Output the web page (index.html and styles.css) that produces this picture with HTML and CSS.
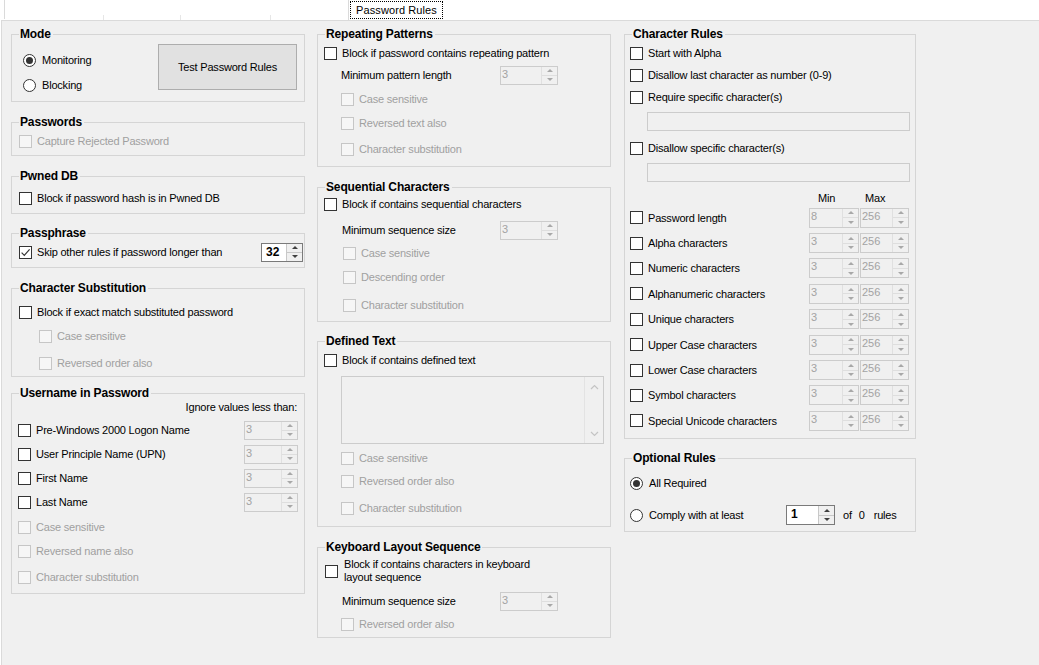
FILE: index.html
```html
<!DOCTYPE html>
<html>
<head>
<meta charset="utf-8">
<title>Password Rules</title>
<link rel="stylesheet" href="styles.css">
</head>
<body>
<div class="tabstrip">
  <div class="tab-edge"></div>
  <div class="tab-ghost g1"></div>
  <div class="tab-ghost g2"></div>
  <div class="tab-ghost g3"></div>
  <div class="tab-gap"></div>
  <div class="tab-active"><div class="tab-focus">Password Rules</div></div>
</div>
<div class="panel">
  <!-- Column 1 -->
  <div class="col col1">
    <fieldset class="grp g-mode"><legend>Mode</legend>
      <div class="mode-body">
        <div class="mode-radios">
          <div class="rb on tall"><span class="dot"></span>Monitoring</div>
          <div class="rb tall mt1"><span class="dot"></span>Blocking</div>
        </div>
        <button class="test-btn" type="button">Test Password Rules</button>
      </div>
    </fieldset>

    <fieldset class="grp g-pw"><legend>Passwords</legend>
      <div class="cb dis ml7 mt2"><span class="box"></span>Capture Rejected Password</div>
    </fieldset>

    <fieldset class="grp g-pwned"><legend>Pwned DB</legend>
      <div class="cb ml7 mt5"><span class="box"></span>Block if password hash is in Pwned DB</div>
    </fieldset>

    <fieldset class="grp g-pass"><legend>Passphrase</legend>
      <div class="cb ml7 mt2">
        <span class="box"><svg width="11" height="11" viewBox="0 0 11 11"><path d="M1.6 5.6 L4.3 8.3 L9.6 2.4" fill="none" stroke="#333" stroke-width="1.2"/></svg></span>
        Skip other rules if password longer than
        <div class="spin en w42 push mr1"><span class="spin-val">32</span><span class="spin-btns"><span class="up"></span><span class="dn"></span></span></div>
      </div>
    </fieldset>

    <fieldset class="grp g-sub"><legend>Character Substitution</legend>
      <div class="cb ml7 mt7"><span class="box"></span>Block if exact match substituted password</div>
      <div class="cb dis ml27 mt4"><span class="box"></span>Case sensitive</div>
      <div class="cb dis ml27 mt7"><span class="box"></span>Reversed order also</div>
    </fieldset>

    <fieldset class="grp g-user"><legend>Username in Password</legend>
      <div class="ignore">Ignore values less than:</div>
      <div class="cb row24 ml6 mt4"><span class="box"></span>Pre-Windows 2000 Logon Name
        <div class="spin dis w54 push mr6"><span class="spin-val">3</span><span class="spin-btns"><span class="up"></span><span class="dn"></span></span></div></div>
      <div class="cb row24 ml6"><span class="box"></span>User Principle Name (UPN)
        <div class="spin dis w54 push mr6"><span class="spin-val">3</span><span class="spin-btns"><span class="up"></span><span class="dn"></span></span></div></div>
      <div class="cb row24 ml6"><span class="box"></span>First Name
        <div class="spin dis w54 push mr6"><span class="spin-val">3</span><span class="spin-btns"><span class="up"></span><span class="dn"></span></span></div></div>
      <div class="cb row24 ml6"><span class="box"></span>Last Name
        <div class="spin dis w54 push mr6"><span class="spin-val">3</span><span class="spin-btns"><span class="up"></span><span class="dn"></span></span></div></div>
      <div class="cb dis ml6 mt3"><span class="box"></span>Case sensitive</div>
      <div class="cb dis ml6 mt4"><span class="box"></span>Reversed name also</div>
      <div class="cb dis ml6 mt6"><span class="box"></span>Character substitution</div>
    </fieldset>
  </div>

  <!-- Column 2 -->
  <div class="col col2">
    <fieldset class="grp g-rep"><legend>Repeating Patterns</legend>
      <div class="cb ml6 mt2"><span class="box"></span>Block if password contains repeating pattern</div>
      <div class="lbl-row ml23 mt2"><span class="lbl w159">Minimum pattern length</span>
        <div class="spin dis w58"><span class="spin-val">3</span><span class="spin-btns"><span class="up"></span><span class="dn"></span></span></div></div>
      <div class="cb dis ml23 mt4"><span class="box"></span>Case sensitive</div>
      <div class="cb dis ml23 mt4"><span class="box"></span>Reversed text also</div>
      <div class="cb dis ml23 mt6"><span class="box"></span>Character substitution</div>
    </fieldset>

    <fieldset class="grp g-seq"><legend>Sequential Characters</legend>
      <div class="cb ml6"><span class="box"></span>Block if contains sequential characters</div>
      <div class="lbl-row ml24 mt6"><span class="lbl w158">Minimum sequence size</span>
        <div class="spin dis w58"><span class="spin-val">3</span><span class="spin-btns"><span class="up"></span><span class="dn"></span></span></div></div>
      <div class="cb dis ml25 mt3"><span class="box"></span>Case sensitive</div>
      <div class="cb dis ml25 mt4"><span class="box"></span>Descending order</div>
      <div class="cb dis ml25 mt8"><span class="box"></span>Character substitution</div>
    </fieldset>

    <fieldset class="grp g-def"><legend>Defined Text</legend>
      <div class="cb ml6 mt2"><span class="box"></span>Block if contains defined text</div>
      <div class="tarea ml23 mt6">
        <div class="vscroll">
          <svg width="9" height="6" viewBox="0 0 9 6"><path d="M1 5 L4.5 1.5 L8 5" fill="none" stroke="#c4c4c4" stroke-width="1.2"/></svg>
          <svg width="9" height="6" viewBox="0 0 9 6"><path d="M1 1 L4.5 4.5 L8 1" fill="none" stroke="#c4c4c4" stroke-width="1.2"/></svg>
        </div>
      </div>
      <div class="cb dis ml23 mt4"><span class="box"></span>Case sensitive</div>
      <div class="cb dis ml23 mt3"><span class="box"></span>Reversed order also</div>
      <div class="cb dis ml23 mt7"><span class="box"></span>Character substitution</div>
    </fieldset>

    <fieldset class="grp g-key"><legend>Keyboard Layout Sequence</legend>
      <div class="cb multi ml7 mt4"><span class="box"></span><span class="multi-text">Block if contains characters in keyboard<br>layout sequence</span></div>
      <div class="lbl-row ml24 mt7"><span class="lbl w158">Minimum sequence size</span>
        <div class="spin dis w58"><span class="spin-val">3</span><span class="spin-btns"><span class="up"></span><span class="dn"></span></span></div></div>
      <div class="cb dis ml23 mt3"><span class="box"></span>Reversed order also</div>
    </fieldset>
  </div>

  <!-- Column 3 -->
  <div class="col col3">
    <fieldset class="grp g-rules"><legend>Character Rules</legend>
      <div class="cb ml5 mt2"><span class="box"></span>Start with Alpha</div>
      <div class="cb ml5 mt2"><span class="box"></span>Disallow last character as number (0-9)</div>
      <div class="cb ml5 mt2"><span class="box"></span>Require specific character(s)</div>
      <div class="tbox ml22 mt5"></div>
      <div class="cb ml5 mt7"><span class="box"></span>Disallow specific character(s)</div>
      <div class="tbox ml22 mt5"></div>
      <div class="minmax mt9"><span class="mm-min">Min</span><span class="mm-max">Max</span></div>

      <div class="rule-row"><div class="cb ml5"><span class="box"></span>Password length</div>
        <div class="spin dis w50 push"><span class="spin-val">8</span><span class="spin-btns"><span class="up"></span><span class="dn"></span></span></div>
        <div class="spin dis w49 ml1 mr6"><span class="spin-val">256</span><span class="spin-btns"><span class="up"></span><span class="dn"></span></span></div></div>
      <div class="rule-row"><div class="cb ml5"><span class="box"></span>Alpha characters</div>
        <div class="spin dis w50 push"><span class="spin-val">3</span><span class="spin-btns"><span class="up"></span><span class="dn"></span></span></div>
        <div class="spin dis w49 ml1 mr6"><span class="spin-val">256</span><span class="spin-btns"><span class="up"></span><span class="dn"></span></span></div></div>
      <div class="rule-row"><div class="cb ml5"><span class="box"></span>Numeric characters</div>
        <div class="spin dis w50 push"><span class="spin-val">3</span><span class="spin-btns"><span class="up"></span><span class="dn"></span></span></div>
        <div class="spin dis w49 ml1 mr6"><span class="spin-val">256</span><span class="spin-btns"><span class="up"></span><span class="dn"></span></span></div></div>
      <div class="rule-row"><div class="cb ml5"><span class="box"></span>Alphanumeric characters</div>
        <div class="spin dis w50 push"><span class="spin-val">3</span><span class="spin-btns"><span class="up"></span><span class="dn"></span></span></div>
        <div class="spin dis w49 ml1 mr6"><span class="spin-val">256</span><span class="spin-btns"><span class="up"></span><span class="dn"></span></span></div></div>
      <div class="rule-row"><div class="cb ml5"><span class="box"></span>Unique characters</div>
        <div class="spin dis w50 push"><span class="spin-val">3</span><span class="spin-btns"><span class="up"></span><span class="dn"></span></span></div>
        <div class="spin dis w49 ml1 mr6"><span class="spin-val">256</span><span class="spin-btns"><span class="up"></span><span class="dn"></span></span></div></div>
      <div class="rule-row"><div class="cb ml5"><span class="box"></span>Upper Case characters</div>
        <div class="spin dis w50 push"><span class="spin-val">3</span><span class="spin-btns"><span class="up"></span><span class="dn"></span></span></div>
        <div class="spin dis w49 ml1 mr6"><span class="spin-val">256</span><span class="spin-btns"><span class="up"></span><span class="dn"></span></span></div></div>
      <div class="rule-row"><div class="cb ml5"><span class="box"></span>Lower Case characters</div>
        <div class="spin dis w50 push"><span class="spin-val">3</span><span class="spin-btns"><span class="up"></span><span class="dn"></span></span></div>
        <div class="spin dis w49 ml1 mr6"><span class="spin-val">256</span><span class="spin-btns"><span class="up"></span><span class="dn"></span></span></div></div>
      <div class="rule-row"><div class="cb ml5"><span class="box"></span>Symbol characters</div>
        <div class="spin dis w50 push"><span class="spin-val">3</span><span class="spin-btns"><span class="up"></span><span class="dn"></span></span></div>
        <div class="spin dis w49 ml1 mr6"><span class="spin-val">256</span><span class="spin-btns"><span class="up"></span><span class="dn"></span></span></div></div>
      <div class="rule-row"><div class="cb ml5"><span class="box"></span>Special Unicode characters</div>
        <div class="spin dis w50 push"><span class="spin-val">3</span><span class="spin-btns"><span class="up"></span><span class="dn"></span></span></div>
        <div class="spin dis w49 ml1 mr6"><span class="spin-val">256</span><span class="spin-btns"><span class="up"></span><span class="dn"></span></span></div></div>
    </fieldset>

    <fieldset class="grp g-opt"><legend>Optional Rules</legend>
      <div class="rb on ml5 mt8"><span class="dot"></span>All Required</div>
      <div class="rb ml5 mt12"><span class="dot"></span><span class="comply">Comply with at least</span>
        <div class="spin en w49"><span class="spin-val">1</span><span class="spin-btns"><span class="up"></span><span class="dn"></span></span></div>
        <span class="of">of</span><span class="zero">0</span><span class="rules">rules</span>
      </div>
    </fieldset>
  </div>
</div>
</body>
</html>
```

FILE: styles.css
```css
* { box-sizing: border-box; }

body {
  margin: 0;
  width: 1039px;
  height: 665px;
  overflow: hidden;
  background: #ffffff;
  font-family: "Liberation Sans", Arial, sans-serif;
  font-size: 11px;
  letter-spacing: -0.2px;
  color: #000;
}

/* ---------- Tab strip ---------- */
.tabstrip {
  height: 20px;
  display: flex;
  align-items: flex-end;
  background: #fff;
}
.tab-edge {
  align-self: flex-start;
  width: 5px;
  height: 19px;
  border-right: 1px solid #dadada;
}
.tab-ghost {
  height: 5px;
  border-right: 1px solid #e6e6e6;
}
.g1 { width: 99px; }
.g2 { width: 77px; }
.g3 { width: 90px; }
.tab-gap { width: 77px; }
.tab-active {
  align-self: flex-start;
  width: 95px;
  height: 20px;
  padding: 1px 0 0 1px;
  background: #fff;
  border-left: 1px solid #dadada;
}
.tab-focus {
  height: 18px;
  width: 93px;
  border: 1px dotted #000;
  display: flex;
  align-items: center;
  justify-content: center;
  letter-spacing: 0.1px;
}

/* ---------- Panel ---------- */
.panel {
  display: flex;
  margin-left: 1px;
  height: 645px;
  padding: 6px 0 0 9px;
  background: #f0f0f0;
  border-top: 1px solid #dadada;
  border-left: 1px solid #dadada;
}
.col { display: flex; flex-direction: column; }
.col1 { width: 294px; }
.col2 { width: 294px; margin-left: 12px; }
.col3 { width: 292px; margin-left: 13px; }

/* ---------- Group boxes ---------- */
.grp {
  margin: 0;
  padding: 0;
  min-width: 0;
  border: 1px solid #d5d5d5;
}
.grp legend {
  margin-left: 7px;
  padding: 0 2px 0 1px;
  font-size: 12px;
  font-weight: bold;
  line-height: 14px;
  letter-spacing: -0.15px;
}
.g-mode  { height: 75px; }
.g-pw    { height: 41px;  margin-top: 13px; }
.g-pwned { height: 45px;  margin-top: 13px; }
.g-pass  { height: 42px;  margin-top: 12px; }
.g-sub   { height: 96px;  margin-top: 13px; }
.g-user  { height: 208px; margin-top: 9px; }

.g-rep   { height: 140px; }
.g-seq   { height: 142px; margin-top: 13px; }
.g-def   { height: 193px; margin-top: 12px; }
.g-key   { height: 98px;  margin-top: 13px; }

.g-rules { height: 412px; }
.g-opt   { height: 81px;  margin-top: 12px; }

/* ---------- Mode ---------- */
.mode-body { display: flex; align-items: flex-start; }
.mode-radios { padding: 7px 0 0 11px; }
.test-btn {
  margin: 3px 7px 0 auto;
  width: 139px;
  height: 46px;
  background: #e1e1e1;
  border: 1px solid #adadad;
  font-family: inherit;
  font-size: 11px;
  letter-spacing: -0.2px;
  color: #000;
  padding: 0;
}

/* ---------- Checkbox / radio ---------- */
.cb {
  display: flex;
  align-items: center;
  height: 20px;
  white-space: nowrap;
}
.cb .box {
  flex: none;
  width: 13px;
  height: 13px;
  margin-right: 5px;
  border: 1px solid #333;
  background: #fff;
  display: flex;
  align-items: center;
  justify-content: center;
}
.cb.dis { color: #a0a0a0; }
.cb.dis .box { border-color: #c6c6c6; background: #f6f6f6; }
.cb.row24 { height: 24px; }
.cb.multi { height: 26px; }
.cb.multi .box { margin-right: 6px; }
.multi-text { line-height: 13px; }

.rb {
  display: flex;
  align-items: center;
  height: 20px;
  white-space: nowrap;
}
.rb.tall { height: 24px; }
.rb .dot {
  flex: none;
  width: 13px;
  height: 13px;
  margin-right: 6px;
  border: 1px solid #333;
  border-radius: 50%;
  background: #fff;
}
.rb.on .dot::after {
  content: "";
  display: block;
  width: 7px;
  height: 7px;
  margin: 2px;
  border-radius: 50%;
  background: #333;
}
.comply { width: 137px; }
.of { margin-left: 8px; }
.zero { margin-left: 7px; }
.rules { margin-left: 9px; }

/* ---------- Labels ---------- */
.ignore {
  height: 14px;
  line-height: 14px;
  text-align: right;
  padding-right: 7px;
}
.lbl-row { display: flex; align-items: center; height: 20px; white-space: nowrap; }
.w159 { width: 159px; }
.w158 { width: 158px; }

.minmax { display: flex; height: 14px; line-height: 14px; }
.mm-min { margin-left: 193px; width: 47px; }
.mm-max { }

.rule-row { display: flex; align-items: center; height: 25.4px; }

/* ---------- Spinners ---------- */
.spin {
  flex: none;
  display: flex;
  height: 19px;
  border: 1px solid #cccccc;
  background: #f0f0f0;
}
.spin-val {
  flex: 1;
  padding-left: 1px;
  line-height: 15px;
  color: #a3a3a3;
  letter-spacing: 0;
}
.spin-btns {
  flex: none;
  width: 16px;
  display: flex;
  flex-direction: column;
  border-left: 1px solid #e0e0e0;
}
.spin-btns span {
  flex: 1;
  display: flex;
  align-items: center;
  justify-content: center;
}
.spin-btns .dn { border-top: 1px solid #dedede; }
.spin-btns .up::after {
  content: "";
  border-left: 3px solid transparent;
  border-right: 3px solid transparent;
  border-bottom: 3px solid #a8a8a8;
}
.spin-btns .dn::after {
  content: "";
  border-left: 3px solid transparent;
  border-right: 3px solid transparent;
  border-top: 3px solid #a8a8a8;
}
.spin.en { border-color: #7a7a7a; background: #fff; }
.spin.en .spin-val { color: #000; font-weight: bold; font-size: 12px; padding-left: 4px; line-height: 16px; }
.spin.en .spin-btns { background: #f0f0f0; border-left-color: #c8c8c8; }
.spin.en .spin-btns .dn { border-top-color: #c8c8c8; }
.spin.en .spin-btns .up::after { border-bottom-color: #404040; }
.spin.en .spin-btns .dn::after { border-top-color: #404040; }

.w42 { width: 42px; }
.w49 { width: 49px; height: 20px; }
.w50 { width: 50px; height: 20px; }
.w54 { width: 54px; }
.w58 { width: 58px; }
.push { margin-left: auto; }

/* ---------- Text boxes ---------- */
.tbox {
  width: 263px;
  height: 19px;
  border: 1px solid #cccccc;
  background: #f0f0f0;
}
.tarea {
  width: 263px;
  height: 68px;
  border: 1px solid #cccccc;
  background: #f0f0f0;
  display: flex;
  justify-content: flex-end;
}
.vscroll {
  width: 19px;
  border-left: 1px solid #e3e3e3;
  display: flex;
  flex-direction: column;
  align-items: center;
  justify-content: space-between;
  padding: 7px 0 6px;
}

/* ---------- Spacing helpers ---------- */
.ml1 { margin-left: 1px; }
.ml5 { margin-left: 5px; }
.ml6 { margin-left: 6px; }
.ml7 { margin-left: 7px; }
.ml22 { margin-left: 22px; }
.ml23 { margin-left: 23px; }
.ml24 { margin-left: 24px; }
.ml25 { margin-left: 25px; }
.ml27 { margin-left: 27px; }
.mr1 { margin-right: 1px; }
.mr6 { margin-right: 6px; }
.mt1 { margin-top: 1px; }
.mt2 { margin-top: 2px; }
.mt3 { margin-top: 3px; }
.mt4 { margin-top: 4px; }
.mt5 { margin-top: 5px; }
.mt6 { margin-top: 6px; }
.mt7 { margin-top: 7px; }
.mt8 { margin-top: 8px; }
.mt9 { margin-top: 9px; }
.mt12 { margin-top: 12px; }
```
